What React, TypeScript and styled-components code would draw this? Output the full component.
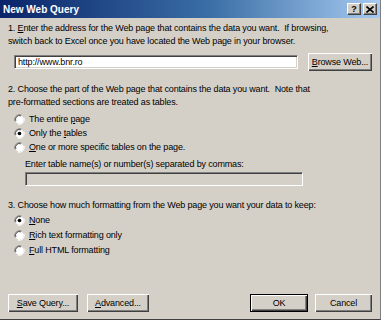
import styled, { createGlobalStyle } from "styled-components";

const GlobalStyle = createGlobalStyle`
  html, body {
    margin: 0;
    padding: 0;
    background: #d4d0c8;
  }
  body {
    font-family: "Liberation Sans", Arial, sans-serif;
    font-size: 9px;
    letter-spacing: -0.15px;
    color: #000;
  }
`;

const Window = styled.div`
  width: 381px;
  height: 320px;
  display: flex;
  flex-direction: column;
  background: #d4d0c8;
  box-sizing: border-box;
  border-right: 1px solid #808080;
  border-bottom: 1px solid #404040;
  overflow: hidden;
`;

const TitleBar = styled.div`
  height: 18px;
  flex: none;
  display: flex;
  align-items: center;
  justify-content: space-between;
  padding: 0 3px 0 3px;
  background: linear-gradient(to right, #0a246a 0%, #3a6ea5 55%, #a6caf0 100%);
`;

const Title = styled.span`
  color: #fff;
  font-weight: 700;
  font-size: 10px;
  letter-spacing: 0;
`;

const TitleButtons = styled.div`
  display: flex;
  gap: 2px;
`;

const CaptionButton = styled.div`
  width: 14px;
  height: 12px;
  box-sizing: border-box;
  background: #d4d0c8;
  border-top: 1px solid #fff;
  border-left: 1px solid #fff;
  border-right: 1px solid #404040;
  border-bottom: 1px solid #404040;
  box-shadow: inset -1px -1px 0 #808080;
  display: flex;
  align-items: center;
  justify-content: center;
  font-weight: 700;
  font-size: 9px;
  line-height: 1;
`;

const Body = styled.div`
  flex: 1;
  display: flex;
  flex-direction: column;
  padding: 4px 8px 0 8px;
`;

const Text = styled.p<{ $indent?: number; $top?: number }>`
  margin: ${(p) => p.$top ?? 0}px 0 0 ${(p) => p.$indent ?? 0}px;
  line-height: 13px;
  white-space: nowrap;
`;

const U = styled.span`
  text-decoration: underline;
`;

const AddressRow = styled.div`
  display: flex;
  align-items: center;
  margin-top: 5px;
  padding-left: 6px;
  gap: 10px;
`;

const TextBox = styled.div<{ $width: number; $disabled?: boolean }>`
  width: ${(p) => p.$width}px;
  height: 14px;
  box-sizing: border-box;
  background: ${(p) => (p.$disabled ? "#d4d0c8" : "#fff")};
  border-top: 1px solid #808080;
  border-left: 1px solid #808080;
  border-right: 1px solid #fff;
  border-bottom: 1px solid #fff;
  box-shadow: inset 1px 1px 0 #404040, inset -1px -1px 0 #d4d0c8;
  padding: 0 3px;
  line-height: 12px;
  white-space: nowrap;
`;

const Button = styled.div<{ $width: number; $default?: boolean }>`
  width: ${(p) => p.$width}px;
  height: 18px;
  box-sizing: border-box;
  background: #d4d0c8;
  display: flex;
  align-items: center;
  justify-content: center;
  border: ${(p) => (p.$default ? "1px solid #000" : "none")};
  box-shadow: inset 1px 1px 0 #fff, inset -1px -1px 0 #404040, inset -2px -2px 0 #808080;
  white-space: nowrap;
`;

const Options = styled.div<{ $top: number; $gap: number }>`
  display: flex;
  flex-direction: column;
  gap: ${(p) => p.$gap}px;
  margin-top: ${(p) => p.$top}px;
  padding-left: 6px;
`;

const Option = styled.label`
  display: flex;
  align-items: center;
  gap: 4px;
  height: 13px;
  line-height: 13px;
  white-space: nowrap;
`;

const RadioBox = styled.svg`
  width: 11px;
  height: 11px;
  flex: none;
`;

function Radio({ checked }: { checked?: boolean }) {
  return (
    <RadioBox viewBox="0 0 12 12">
      <path d="M1 8 A5.5 5.5 0 0 1 8 1" fill="none" stroke="#808080" strokeWidth="1" />
      <path d="M4 11 A5.5 5.5 0 0 0 11 4" fill="none" stroke="#fff" strokeWidth="1" />
      <circle cx="6" cy="6" r="4.5" fill="#fff" stroke="none" />
      <path d="M2 7.5 A4.2 4.2 0 0 1 7.5 2" fill="none" stroke="#404040" strokeWidth="1" />
      {checked && <circle cx="6" cy="6" r="2" fill="#000" />}
    </RadioBox>
  );
}

const TableNames = styled.div`
  display: flex;
  flex-direction: column;
  gap: 1px;
  padding-left: 17px;
  margin-top: 4px;
`;

const Spacer = styled.div`
  flex: 1;
`;

const Footer = styled.div`
  display: flex;
  align-items: center;
  gap: 9px;
  padding-bottom: 7px;
`;

const FooterRight = styled.div`
  margin-left: auto;
  display: flex;
  gap: 7px;
`;

export default function App() {
  return (
    <>
      <GlobalStyle />
      <Window>
        <TitleBar>
          <Title>New Web Query</Title>
          <TitleButtons>
            <CaptionButton>?</CaptionButton>
            <CaptionButton>
              <svg width="8" height="7" viewBox="0 0 8 7">
                <path d="M0.5 0.5 L7.5 6.5 M7.5 0.5 L0.5 6.5" stroke="#000" strokeWidth="1.6" />
              </svg>
            </CaptionButton>
          </TitleButtons>
        </TitleBar>
        <Body>
          <Text>
            1. <U>E</U>nter the address for the Web page that contains the data you want.&nbsp; If browsing,
          </Text>
          <Text>switch back to Excel once you have located the Web page in your browser.</Text>
          <AddressRow>
            <TextBox $width={284}>http://www.bnr.ro</TextBox>
            <Button $width={64}>
              <span>
                <U>B</U>rowse Web...
              </span>
            </Button>
          </AddressRow>
          <Text $top={12}>
            2. Choose the part of the Web page that contains the data you want.&nbsp; Note that
          </Text>
          <Text>pre-formatted sections are treated as tables.</Text>
          <Options $top={4} $gap={1}>
            <Option>
              <Radio />
              <span>
                The entire <U>p</U>age
              </span>
            </Option>
            <Option>
              <Radio checked />
              <span>
                Only the <U>t</U>ables
              </span>
            </Option>
            <Option>
              <Radio />
              <span>
                <U>O</U>ne or more specific tables on the page.
              </span>
            </Option>
          </Options>
          <TableNames>
            <Text>Enter table name(s) or number(s) separated by commas:</Text>
            <TextBox $width={278} $disabled />
          </TableNames>
          <Text $top={13}>
            3. Choose how much formatting from the Web page you want your data to keep:
          </Text>
          <Options $top={2} $gap={2}>
            <Option>
              <Radio checked />
              <span>
                <U>N</U>one
              </span>
            </Option>
            <Option>
              <Radio />
              <span>
                <U>R</U>ich text formatting only
              </span>
            </Option>
            <Option>
              <Radio />
              <span>
                <U>F</U>ull HTML formatting
              </span>
            </Option>
          </Options>
          <Spacer />
          <Footer>
            <Button $width={70}>
              <span>
                <U>S</U>ave Query...
              </span>
            </Button>
            <Button $width={62}>
              <span>
                <U>A</U>dvanced...
              </span>
            </Button>
            <FooterRight>
              <Button $width={58} $default>
                OK
              </Button>
              <Button $width={57}>Cancel</Button>
            </FooterRight>
          </Footer>
        </Body>
      </Window>
    </>
  );
}
